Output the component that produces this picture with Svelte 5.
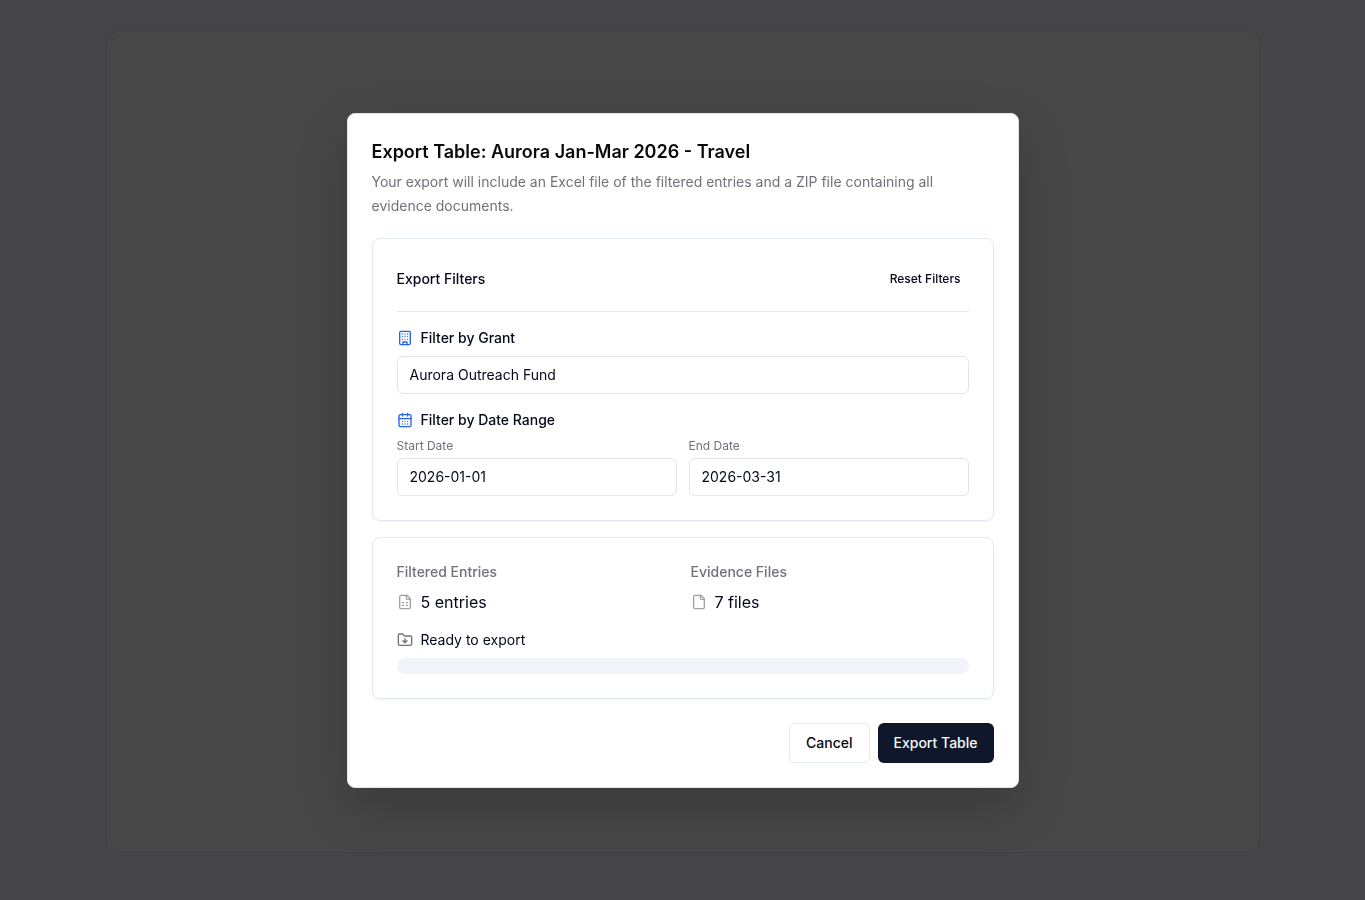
<script>
  const initial = { grant: 'Aurora Outreach Fund', start: '2026-01-01', end: '2026-03-31' };
  let grant = $state(initial.grant);
  let start = $state(initial.start);
  let end = $state(initial.end);
  let progress = $state(0);

  function reset() {
    grant = initial.grant;
    start = initial.start;
    end = initial.end;
  }
</script>

<div class="page">
  <div class="panel"></div>
</div>

<div class="overlay">
  <div class="dialog" role="dialog" aria-modal="true" aria-labelledby="title" aria-describedby="description">
    <header>
      <h2 id="title">Export Table: Aurora Jan-Mar 2026 - Travel</h2>
      <p id="description">Your export will include an Excel file of the filtered entries and a ZIP file containing all evidence documents.</p>
    </header>

    <div class="cards">
      <section class="card">
        <div class="card-head">
          <h3>Export Filters</h3>
          <button type="button" class="reset" onclick={reset}>Reset Filters</button>
        </div>

        <div class="field">
          <label class="label" for="grant">
            <svg class="icon blue" viewBox="0 0 24 24" aria-hidden="true">
              <rect width="16" height="20" x="4" y="2" rx="2" ry="2" />
              <path d="M9 22v-4h6v4M8 6h.01M16 6h.01M12 6h.01M12 10h.01M12 14h.01M16 10h.01M16 14h.01M8 10h.01M8 14h.01" />
            </svg>
            Filter by Grant
          </label>
          <input id="grant" type="text" bind:value={grant} />
        </div>

        <div class="field" role="group" aria-labelledby="range">
          <div class="label" id="range">
            <svg class="icon blue" viewBox="0 0 24 24" aria-hidden="true">
              <path d="M8 2v4M16 2v4" />
              <rect width="18" height="18" x="3" y="4" rx="2" />
              <path d="M3 10h18M8 14h.01M12 14h.01M16 14h.01M8 18h.01M12 18h.01M16 18h.01" />
            </svg>
            Filter by Date Range
          </div>
          <div class="dates">
            <div class="date">
              <label for="start">Start Date</label>
              <input id="start" type="text" bind:value={start} />
            </div>
            <div class="date">
              <label for="end">End Date</label>
              <input id="end" type="text" bind:value={end} />
            </div>
          </div>
        </div>
      </section>

      <section class="card">
        <div class="stats">
          <div class="stat">
            <h4>Filtered Entries</h4>
            <div class="value">
              <svg class="icon muted" viewBox="0 0 24 24" aria-hidden="true">
                <path d="M15 2H6a2 2 0 0 0-2 2v16a2 2 0 0 0 2 2h12a2 2 0 0 0 2-2V7Z" />
                <path d="M14 2v4a2 2 0 0 0 2 2h4M8 13h2M14 13h2M8 17h2M14 17h2" />
              </svg>
              5 entries
            </div>
          </div>
          <div class="stat">
            <h4>Evidence Files</h4>
            <div class="value">
              <svg class="icon muted" viewBox="0 0 24 24" aria-hidden="true">
                <path d="M15 2H6a2 2 0 0 0-2 2v16a2 2 0 0 0 2 2h12a2 2 0 0 0 2-2V7Z" />
                <path d="M14 2v4a2 2 0 0 0 2 2h4" />
              </svg>
              7 files
            </div>
          </div>
        </div>

        <div class="field">
          <div class="status">
            <svg class="icon gray" viewBox="0 0 24 24" aria-hidden="true">
              <path d="M20 20a2 2 0 0 0 2-2V8a2 2 0 0 0-2-2h-7.900a2 2 0 0 1-1.690-.900L9.600 3.900A2 2 0 0 0 7.930 3H4a2 2 0 0 0-2 2v13a2 2 0 0 0 2 2Z" />
              <path d="M12 10v6M15 13l-3 3-3-3" />
            </svg>
            Ready to export
          </div>
          <div class="track" role="progressbar" aria-label="Export progress" aria-valuemin="0" aria-valuemax="100" aria-valuenow={progress}>
            <div class="bar" style="width: {progress}%"></div>
          </div>
        </div>
      </section>
    </div>

    <footer>
      <button type="button" class="button">Cancel</button>
      <button type="button" class="button primary">Export Table</button>
    </footer>
  </div>
</div>

<style>
  :global(body) {
    margin: 0;
    background: #454547;
    font-family: Inter, sans-serif;
    font-size: 14px;
    line-height: 20px;
    color: #020817;
  }
  * {
    box-sizing: border-box;
  }
  h2, h3, h4, p {
    margin: 0;
  }
  .page {
    display: flex;
    min-height: 100vh;
    padding: 31px 32px 47px;
  }
  .panel {
    flex: 1;
    max-width: 1154px;
    margin: 0 auto;
    border: 1px solid #414142;
    border-radius: 12px;
    background: #474747;
  }
  .overlay {
    position: fixed;
    inset: 0;
    display: flex;
    padding: 16px;
    overflow: auto;
  }
  .dialog {
    width: 100%;
    max-width: 672px;
    margin: auto;
    padding: 24px;
    border: 1px solid #e4e4e7;
    border-radius: 8px;
    background: #fff;
    box-shadow: 0 20px 50px rgba(0, 0, 0, 0.18);
  }
  header {
    display: grid;
    gap: 4px;
    margin-bottom: 20px;
  }
  h2 {
    font-size: 18px;
    font-weight: 600;
    line-height: 28px;
    color: #09090b;
  }
  header p {
    line-height: 24px;
    color: #71717a;
  }
  .cards {
    display: grid;
    gap: 16px;
  }
  .card {
    display: grid;
    gap: 16px;
    padding: 24px;
    border: 1px solid #e2e8f0;
    border-radius: 8px;
    box-shadow: 0 1px 2px rgba(0, 0, 0, 0.05);
  }
  .card-head {
    display: flex;
    align-items: center;
    justify-content: space-between;
    padding-bottom: 16px;
    border-bottom: 1px solid #e4e4e7;
  }
  h3 {
    font-size: 14px;
    font-weight: 500;
  }
  button, input {
    font: inherit;
    color: inherit;
  }
  button {
    cursor: pointer;
  }
  .reset {
    height: 32px;
    padding: 0 8px;
    border: 0;
    border-radius: 6px;
    background: transparent;
    font-size: 12px;
    font-weight: 500;
  }
  .field, .stat {
    display: grid;
    gap: 8px;
  }
  .label, .status, .value {
    display: flex;
    align-items: center;
    gap: 8px;
  }
  .label {
    font-weight: 500;
  }
  .icon {
    flex: none;
    width: 16px;
    height: 16px;
    fill: none;
    stroke: currentColor;
    stroke-width: 2;
    stroke-linecap: round;
    stroke-linejoin: round;
  }
  .blue {
    color: #2563eb;
  }
  .gray {
    color: #71717a;
  }
  .muted {
    color: #a1a1aa;
  }
  input {
    width: 100%;
    height: 38px;
    padding: 0 12px;
    border: 1px solid #e4e4e7;
    border-radius: 6px;
    background: #fff;
  }
  .dates {
    display: grid;
    grid-template-columns: 1fr 1fr;
    gap: 12px;
  }
  .date {
    display: grid;
    gap: 4px;
  }
  .date label {
    font-size: 12px;
    line-height: 16px;
    color: #71717a;
  }
  .stats {
    display: grid;
    grid-template-columns: 1fr 1fr;
    gap: 16px;
  }
  h4 {
    font-size: 14px;
    font-weight: 500;
    color: #71717a;
  }
  .value {
    font-size: 16px;
    line-height: 24px;
  }
  .track {
    height: 16px;
    overflow: hidden;
    border-radius: 8px;
    background: #f1f5f9;
  }
  .bar {
    height: 100%;
    background: #0f172a;
  }
  footer {
    display: flex;
    justify-content: flex-end;
    gap: 8px;
    margin-top: 24px;
  }
  .button {
    height: 40px;
    padding: 0 16px;
    border: 1px solid #e2e8f0;
    border-radius: 6px;
    background: #fff;
    font-weight: 500;
    color: #09090b;
  }
  .primary {
    border: 0;
    background: #0f172a;
    color: #f8fafc;
  }
</style>
